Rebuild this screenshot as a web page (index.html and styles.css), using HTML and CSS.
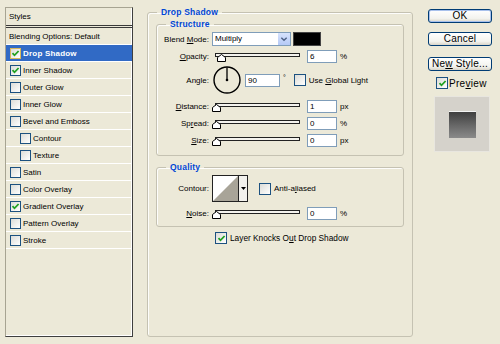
FILE: index.html
```html
<!DOCTYPE html>
<html>
<head>
<meta charset="utf-8">
<title>Layer Style</title>
<link rel="stylesheet" href="styles.css">
</head>
<body>
<div class="dialog">
  <div class="styles-panel">
    <div class="sp-head">Styles</div>
    <div class="sp-row plain">Blending Options: Default</div>
    <div class="sp-row selected"><span class="cb"><svg viewBox="0 0 9 9"><path d="M1.5 4.2 L3.5 6.3 L7.6 2"/></svg></span><span>Drop Shadow</span></div>
    <div class="sp-row"><span class="cb"><svg viewBox="0 0 9 9"><path d="M1.5 4.2 L3.5 6.3 L7.6 2"/></svg></span><span>Inner Shadow</span></div>
    <div class="sp-row"><span class="cb"></span><span>Outer Glow</span></div>
    <div class="sp-row"><span class="cb"></span><span>Inner Glow</span></div>
    <div class="sp-row"><span class="cb"></span><span>Bevel and Emboss</span></div>
    <div class="sp-row sub"><span class="cb"></span><span>Contour</span></div>
    <div class="sp-row sub"><span class="cb"></span><span>Texture</span></div>
    <div class="sp-row"><span class="cb"></span><span>Satin</span></div>
    <div class="sp-row"><span class="cb"></span><span>Color Overlay</span></div>
    <div class="sp-row"><span class="cb"><svg viewBox="0 0 9 9"><path d="M1.5 4.2 L3.5 6.3 L7.6 2"/></svg></span><span>Gradient Overlay</span></div>
    <div class="sp-row"><span class="cb"></span><span>Pattern Overlay</span></div>
    <div class="sp-row"><span class="cb"></span><span>Stroke</span></div>
  </div>

  <fieldset class="group main">
    <legend>Drop Shadow</legend>
    <fieldset class="group structure">
      <legend>Structure</legend>
      <div class="frow blend">
        <span class="flabel">Blend <u>M</u>ode:</span>
        <span class="select"><span class="sel-text">Multiply</span><span class="sel-btn"><svg viewBox="0 0 9 6"><path d="M1.5 1.5 L4.5 4.3 L7.5 1.5"/></svg></span></span>
        <span class="swatch"></span>
      </div>
      <div class="frow opacity">
        <span class="flabel"><u>O</u>pacity:</span>
        <span class="slider"><span class="track"></span><svg class="thumb" style="left:5px" viewBox="0 0 9 8"><path d="M0.5 7.5 V3.5 L4.5 0.5 L8.5 3.5 V7.5 Z"/></svg></span>
        <span class="num">6</span><span class="unit">%</span>
      </div>
      <div class="frow angle">
        <span class="flabel">Angle:</span>
        <svg class="dial" viewBox="0 0 28 28"><circle cx="14" cy="14" r="13"/><path d="M14 14 V1.5"/><circle class="dot" cx="14" cy="14" r="1.3"/></svg>
        <span class="num wide">90</span><span class="deg">°</span>
        <span class="cb big"></span><span class="cbl">Use <u>G</u>lobal Light</span>
      </div>
      <div class="frow dist">
        <span class="flabel"><u>D</u>istance:</span>
        <span class="slider"><span class="track"></span><svg class="thumb" style="left:0px" viewBox="0 0 9 8"><path d="M0.5 7.5 V3.5 L4.5 0.5 L8.5 3.5 V7.5 Z"/></svg></span>
        <span class="num">1</span><span class="unit">px</span>
      </div>
      <div class="frow">
        <span class="flabel">Sp<u>r</u>ead:</span>
        <span class="slider"><span class="track"></span><svg class="thumb" style="left:0px" viewBox="0 0 9 8"><path d="M0.5 7.5 V3.5 L4.5 0.5 L8.5 3.5 V7.5 Z"/></svg></span>
        <span class="num">0</span><span class="unit">%</span>
      </div>
      <div class="frow">
        <span class="flabel"><u>S</u>ize:</span>
        <span class="slider"><span class="track"></span><svg class="thumb" style="left:0px" viewBox="0 0 9 8"><path d="M0.5 7.5 V3.5 L4.5 0.5 L8.5 3.5 V7.5 Z"/></svg></span>
        <span class="num">0</span><span class="unit">px</span>
      </div>
    </fieldset>

    <fieldset class="group quality">
      <legend>Quality</legend>
      <div class="frow contour">
        <span class="flabel">Contour:</span>
        <span class="contour-box"><svg class="curve" viewBox="0 0 25 25"><path d="M0 25 L25 0 V25 Z"/></svg><span class="contour-btn"><svg viewBox="0 0 5 3"><path d="M0 0 H5 L2.5 3 Z"/></svg></span></span>
        <span class="cb big aa"></span><span class="cbl">Anti-a<u>l</u>iased</span>
      </div>
      <div class="frow noise">
        <span class="flabel"><u>N</u>oise:</span>
        <span class="slider"><span class="track"></span><svg class="thumb" style="left:0px" viewBox="0 0 9 8"><path d="M0.5 7.5 V3.5 L4.5 0.5 L8.5 3.5 V7.5 Z"/></svg></span>
        <span class="num">0</span><span class="unit">%</span>
      </div>
    </fieldset>

    <div class="knock"><span class="cb big"><svg viewBox="0 0 9 9"><path d="M1.5 4.2 L3.5 6.3 L7.6 2"/></svg></span><span class="cbl">Layer Knocks O<u>u</u>t Drop Shadow</span></div>
  </fieldset>

  <div class="side">
    <button class="btn default">OK</button>
    <button class="btn cancel">Cancel</button>
    <button class="btn newstyle">Ne<u>w</u> Style...</button>
    <div class="preview-row"><span class="cb big"><svg viewBox="0 0 9 9"><path d="M1.5 4.2 L3.5 6.3 L7.6 2"/></svg></span><span>Pre<u>v</u>iew</span></div>
    <div class="preview-box"><div class="preview-square"></div></div>
  </div>
</div>
</body>
</html>
```

FILE: styles.css
```css
* { box-sizing: border-box; }
html, body { margin: 0; padding: 0; }
body {
  width: 500px;
  height: 344px;
  overflow: hidden;
  background: #ECE9D8;
  font-family: "Liberation Sans", Arial, sans-serif;
  font-size: 8px;
  color: #000;
}
u { text-decoration: underline; text-underline-offset: 1px; }

.dialog {
  display: flex;
  align-items: flex-start;
  padding: 6px 0 0 5px;
}

/* ---------- styles list ---------- */
.styles-panel {
  flex: none;
  margin-top: 1px;
  width: 128px;
  height: 330px;
  border: 1px solid;
  border-color: #A7A492 #3F3F3F #3F3F3F #A7A492;
  box-shadow: inset -1px -1px #fff;
}
.sp-head {
  height: 20px;
  border-bottom: 3px double #3a3a3a;
  padding-left: 3px;
  display: flex;
  align-items: center;
}
.sp-row {
  height: 17px;
  border-bottom: 1px solid #fff;
  display: flex;
  align-items: center;
  gap: 2px;
  padding-left: 4px;
}
.sp-row.plain { padding-left: 3px; }
.sp-row.sub { padding-left: 14px; }
.sp-row.selected {
  background: #316AC5;
  color: #fff;
  font-weight: bold;
  letter-spacing: 0.2px;
}
.sp-row.selected .cb { border-color: #D9B85C; }

.cb {
  flex: none;
  width: 11px;
  height: 11px;
  border: 1px solid #1C5180;
  background: linear-gradient(135deg, #DCDCD7, #FFFFFF);
  display: inline-flex;
  align-items: center;
  justify-content: center;
}
.cb.big { width: 12px; height: 12px; }
.cb svg { width: 9px; height: 9px; }
.cb path { fill: none; stroke: #21A121; stroke-width: 1.8; }

/* ---------- group boxes ---------- */
fieldset.group {
  margin: 0;
  min-width: 0;
  border: 1px solid #C5C2B2;
  border-radius: 3px;
  box-shadow: inset 1px 1px #FDFDFB;
}
.group legend {
  color: #0046D5;
  font-weight: bold;
  font-size: 8.5px;
  line-height: 12px;
  padding: 0 4px;
  letter-spacing: 0.2px;
}
fieldset.group.main {
  flex: none;
  margin-left: 14px;
  width: 266px;
  height: 331px;
  padding: 0 8px;
}
.main > legend { margin-left: 1px; }
fieldset.group.structure,
fieldset.group.quality {
  width: 248px;
  padding: 2px 0 8px 0;
}
.structure > legend, .quality > legend { margin-left: 9px; }
fieldset.group.quality { margin-top: 5px; padding-bottom: 6px; }

.frow {
  display: flex;
  align-items: center;
  height: 13px;
  margin-top: 4px;
}
.frow.blend { height: 14px; margin-top: 0; }
.frow.angle { height: 28px; margin-top: 3px; }
.frow.dist { margin-top: 6px; }
.frow.contour { height: 27px; margin-top: 0; }
.frow.noise { margin-top: 5px; }

.flabel {
  flex: none;
  width: 52px;
  text-align: right;
  margin-right: 3px;
}

.select {
  flex: none;
  display: flex;
  width: 79px;
  height: 14px;
  border: 1px solid #7F9DB9;
  background: #fff;
}
.sel-text { flex: 1; padding-left: 2px; line-height: 12px; }
.sel-btn {
  width: 13px;
  background: linear-gradient(#D7E3FC, #B5C9F6);
  border-left: 1px solid #fff;
  display: flex;
  align-items: center;
  justify-content: center;
}
.sel-btn svg { width: 8px; height: 6px; }
.sel-btn path { fill: none; stroke: #4D6185; stroke-width: 1.6; }
.swatch {
  flex: none;
  margin-left: 2px;
  width: 28px;
  height: 14px;
  background: #000;
  border: 1px solid #444;
}

.slider {
  flex: none;
  position: relative;
  width: 88px;
  height: 13px;
}
.track {
  position: absolute;
  left: 3px;
  top: 3px;
  width: 85px;
  height: 4px;
  border: 1px solid #222;
  background: #F4F3EE;
}
.thumb {
  position: absolute;
  top: 4px;
  width: 9px;
  height: 8px;
}
.thumb path { fill: #fff; stroke: #000; stroke-width: 1; }

.num {
  flex: none;
  margin-left: 7px;
  width: 30px;
  height: 13px;
  border: 1px solid #7F9DB9;
  background: #fff;
  padding-left: 2px;
  line-height: 11px;
}
.unit { margin-left: 3px; }

.dial { flex: none; width: 28px; height: 28px; margin-left: 1px; }
.dial circle { fill: none; stroke: #000; stroke-width: 1.4; }
.dial path { stroke: #000; stroke-width: 1.3; }
.dial .dot { fill: #000; stroke: none; }
.num.wide { width: 35px; margin-left: 4px; }
.deg { margin-left: 3px; align-self: flex-start; margin-top: 8px; font-size: 7px; }
.angle .cb { margin-left: 8px; }
.cbl { margin-left: 3px; }

.contour-box {
  flex: none;
  display: flex;
  width: 36px;
  height: 27px;
  border: 1px solid #222;
  background: #fff;
}
.curve { width: 25px; height: 25px; display: block; }
.curve path { fill: #A8A498; }
.contour-btn {
  flex: 1;
  border-left: 1px solid #222;
  background: #F2F1EC;
  display: flex;
  align-items: center;
  justify-content: center;
}
.contour-btn svg { width: 5px; height: 3px; }
.contour-btn path { fill: #000; }
.cb.aa { margin-left: 11px; }

.knock {
  display: flex;
  align-items: center;
  margin: 5px 0 0 59px;
  font-size: 8.3px;
}

/* ---------- right column ---------- */
.side {
  flex: none;
  margin-left: 15px;
  margin-top: 3px;
  width: 64px;
  display: flex;
  flex-direction: column;
  align-items: flex-start;
  font-size: 10px;
}
.btn {
  width: 64px;
  height: 14px;
  padding: 0;
  border: 1px solid #003C74;
  border-radius: 3px;
  background: linear-gradient(#FFFFFF, #F3F3EE 70%, #D9D5C9);
  font-family: inherit;
  font-size: 10px;
  line-height: 12px;
  color: #000;
  letter-spacing: 0.2px;
}
.btn.default { box-shadow: inset 0 0 0 1px #A8C1EC; }
.btn.cancel { margin-top: 9px; }
.btn.newstyle { margin-top: 11px; }
.preview-row {
  display: flex;
  align-items: center;
  gap: 1px;
  margin: 6px 0 0 8px;
  letter-spacing: 0.3px;
}
.preview-box {
  margin: 7px 0 0 6px;
  width: 56px;
  height: 56px;
  background: #D5D2CB;
  border: 1px solid #E8E6DF;
  display: flex;
  align-items: center;
  justify-content: center;
}
.preview-square {
  width: 27px;
  height: 27px;
  border-top: 1px solid #F4F4F4;
  background: linear-gradient(#3F3F3F, #6A6A6A 55%, #8A8A8A);
}
```
